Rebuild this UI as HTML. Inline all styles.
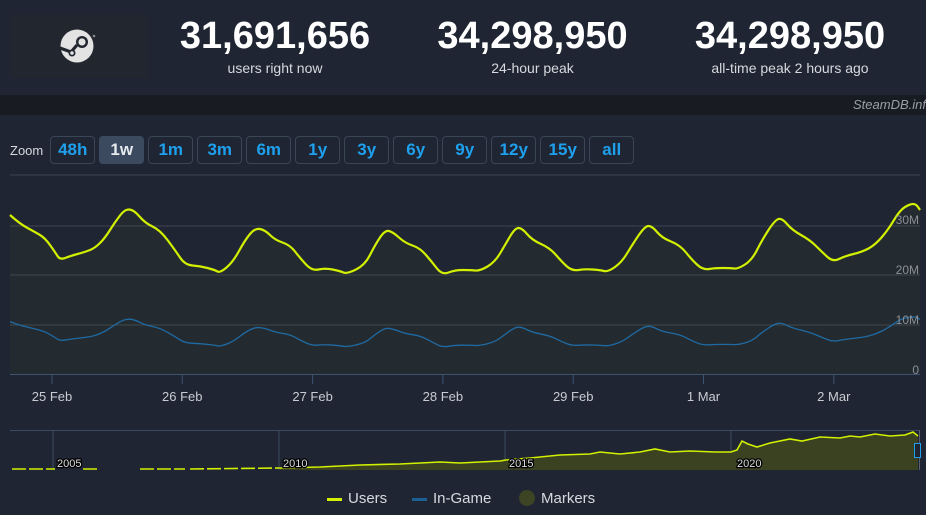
<!DOCTYPE html>
<html><head><meta charset="utf-8"><style>
*{margin:0;padding:0;box-sizing:border-box}
body{width:926px;height:515px;background:#1f2532;font-family:"Liberation Sans",sans-serif;overflow:hidden;position:relative;color:#fff}
.logo{position:absolute;left:11px;top:15px;width:136px;height:63px;background:#22262e}
.stat{position:absolute;top:14px;text-align:center}
.stat b{display:block;font-size:38px;font-weight:bold;line-height:44px;letter-spacing:0px}
.stat span{display:block;font-size:14px;color:#d6d9de;line-height:18px;margin-top:1px}
.bar{position:absolute;left:0;top:95px;width:926px;height:20px;background:#181b22}
.bar i{position:absolute;right:0;top:2px;font-size:13px;color:#9aa0a8}
.zoom{position:absolute;left:10px;top:136px;display:flex;align-items:center;gap:4px}
.zoom .l{font-size:13px;color:#d6d9de;margin-right:3px}
.zoom .b{height:28px;border:1px solid #3a4556;border-radius:4px;color:#1ea0ee;font-weight:bold;font-size:17px;line-height:26px;text-align:center;width:45px}
.zoom .b.a{background:#3b4a5e;color:#e6eaef;border-color:#3b4a5e}
.leg{position:absolute;top:490px;font-size:15px;color:#d6d9de}
</style></head><body>
<div class="logo"><svg width="136" height="63" viewBox="0 0 136 63">
<circle cx="66" cy="31" r="16.5" fill="#e3e3e3"/>
<circle cx="71" cy="27" r="6" fill="#22262e"/><circle cx="71" cy="27" r="3.6" fill="#e3e3e3"/>
<path d="M49 33 L60 37 L66 30" stroke="#22262e" stroke-width="3.2" fill="none"/>
<circle cx="61" cy="38" r="3.5" fill="#22262e"/><circle cx="61" cy="38" r="1.8" fill="#e3e3e3"/>
<circle cx="83" cy="21" r="1.3" fill="#888"/></svg></div>
<div class="stat" style="left:175px;width:200px"><b>31,691,656</b><span>users right now</span></div>
<div class="stat" style="left:420px;width:225px"><b>34,298,950</b><span>24-hour peak</span></div>
<div class="stat" style="left:680px;width:220px"><b>34,298,950</b><span>all-time peak 2 hours ago</span></div>
<div class="bar"><i>SteamDB.inf</i></div>
<div class="zoom"><span class="l">Zoom</span>
<span class="b">48h</span><span class="b a">1w</span><span class="b">1m</span><span class="b">3m</span><span class="b">6m</span><span class="b">1y</span><span class="b">3y</span><span class="b">6y</span><span class="b">9y</span><span class="b">12y</span><span class="b">15y</span><span class="b">all</span></div>
<svg id="c" style="position:absolute;left:0;top:0" width="926" height="515"></svg>
<div class="leg" style="left:327px"><span style="display:inline-block;width:15px;height:3px;background:#d2f000;vertical-align:middle;margin-right:6px"></span>Users</div>
<div class="leg" style="left:412px"><span style="display:inline-block;width:15px;height:3px;background:#1b5f93;vertical-align:middle;margin-right:6px"></span>In-Game</div>
<div class="leg" style="left:519px"><span style="display:inline-block;width:16px;height:16px;border-radius:50%;background:#3c4424;vertical-align:middle;margin-right:6px;margin-top:-3px"></span>Markers</div>
<script>
var u=[[10,215],[20,224],[35,232],[45,238],[55,252],[60,260],[70,256],[85,252],[95,248],[105,238],[115,222],[125,209],[134,210],[145,223],[160,230],[175,250],[185,265],[200,266],[215,270],[220,273],[233,262],[245,240],[255,228],[265,230],[275,240],[290,245],[300,258],[312,271],[325,268],[340,271],[347,274],[365,265],[375,245],[385,230],[393,232],[405,243],[420,248],[432,262],[442,275],[455,270],[470,270],[480,271],[495,262],[505,245],[515,228],[522,228],[532,240],[550,248],[562,262],[572,271],[585,269],[600,270],[608,272],[622,262],[632,245],[645,226],[652,226],[662,238],[680,245],[692,260],[703,270],[715,268],[730,268],[738,269],[752,260],[762,240],[775,220],[782,218],[792,230],[810,240],[822,252],[833,262],[845,256],[862,252],[875,245],[888,230],[900,210],[910,204],[916,204],[920,210]];
function sm(p){var d="M"+p[0][0]+" "+p[0][1];for(var i=1;i<p.length-1;i++){var mx=(p[i][0]+p[i+1][0])/2,my=(p[i][1]+p[i+1][1])/2;d+=" Q"+p[i][0]+" "+p[i][1]+" "+mx+" "+my;}var l=p[p.length-1];return d+" L"+l[0]+" "+l[1];}
var g=u.map(function(q){return[q[0],(319+(q[1]-209)*0.43).toFixed(1)*1]});
var s='';
[175,226,275,325].forEach(function(y){s+='<line x1="10" x2="920" y1="'+y+'" y2="'+y+'" stroke="#3d4450" stroke-width="1"/>'});
s+='<line x1="10" x2="920" y1="374.5" y2="374.5" stroke="#3b5270"/>';
var du=sm(u);
s+='<path d="'+du+' L920 374 L10 374Z" fill="rgba(210,240,0,0.035)"/>';
s+='<path d="'+sm(g)+'" stroke="#1f6aa3" stroke-width="1.3" fill="none"/>';
s+='<path d="'+du+'" stroke="#d2f000" stroke-width="2.2" fill="none"/>';
[["30M",220],["20M",270],["10M",320],["0",370]].forEach(function(t){s+='<text x="919" y="'+(t[1]+4)+'" text-anchor="end" font-size="12" fill="#8a9099" font-family="Liberation Sans">'+t[0]+'</text>'});
var days=["25 Feb","26 Feb","27 Feb","28 Feb","29 Feb","1 Mar","2 Mar"];
days.forEach(function(d,i){var x=52+130.3*i;s+='<line x1="'+x+'" x2="'+x+'" y1="375" y2="384" stroke="#3b5270"/><text x="'+x+'" y="401" text-anchor="middle" font-size="13" fill="#c8ccd2" font-family="Liberation Sans">'+d+'</text>'});
s+='<line x1="10" x2="920" y1="430.5" y2="430.5" stroke="#3b4a5e"/>';
[53,279,505,731].forEach(function(x){s+='<line x1="'+x+'" x2="'+x+'" y1="430" y2="470" stroke="#3b4a5e"/>'});
var n=[[280,468],[320,467],[360,465],[400,464],[420,463],[440,462],[460,463],[480,462],[500,461],[506,460],[530,458],[560,455],[590,454],[600,452],[620,454],[640,452],[655,449],[670,452],[690,451],[715,452],[731,452],[737,450],[742,441],[748,444],[757,447],[770,443],[790,439],[802,441],[820,437],[840,438],[850,436],[860,437],[875,434],[890,436],[905,435],[913,432],[918,436]];
var nd="M"+n.map(function(q){return q[0]+" "+q[1]}).join(" L");
s+='<path d="'+nd+' L918 470 L280 470Z" fill="#3a4222"/>';
s+='<path d="'+nd+'" stroke="#d2f000" stroke-width="1.6" fill="none"/>';
s+='<path d="M12 469 L55 469 M83 469 L100 469 M140 469 L185 469 M190 469 L280 468" stroke="#d2f000" stroke-width="1.6" stroke-dasharray="14 3" fill="none"/>';
s+='<line x1="919.5" x2="919.5" y1="430" y2="470" stroke="#5a6270"/>';
s+='<rect x="914.5" y="443.5" width="6" height="14" fill="#1f2532" stroke="#1ea0ee"/>';
[["2005",57],["2010",283],["2015",509],["2020",737]].forEach(function(t){s+='<text x="'+t[1]+'" y="467" font-size="11" fill="#ddd" stroke="#000" stroke-width="2.5" paint-order="stroke" font-family="Liberation Sans">'+t[0]+'</text>'});
document.getElementById('c').innerHTML=s;
</script>
</body></html>
